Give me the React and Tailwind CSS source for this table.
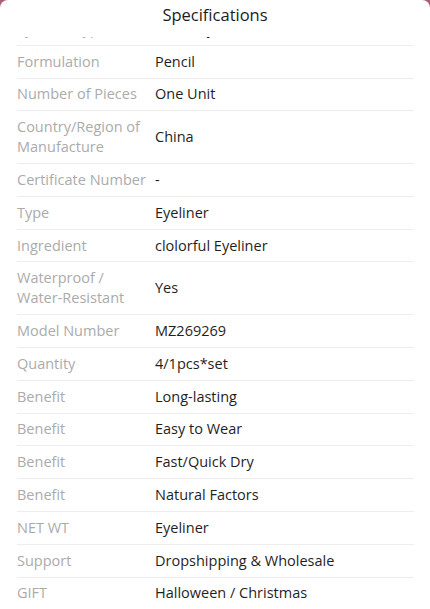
import React from "react";

const specs = [
  { label: "Eyeliner Type", value: "Pencil Eyeliner" },
  { label: "Formulation", value: "Pencil" },
  { label: "Number of Pieces", value: "One Unit" },
  { label: "Country/Region of Manufacture", value: "China" },
  { label: "Certificate Number", value: "-" },
  { label: "Type", value: "Eyeliner" },
  { label: "Ingredient", value: "clolorful Eyeliner" },
  { label: "Waterproof / Water-Resistant", value: "Yes" },
  { label: "Model Number", value: "MZ269269" },
  { label: "Quantity", value: "4/1pcs*set" },
  { label: "Benefit", value: "Long-lasting" },
  { label: "Benefit", value: "Easy to Wear" },
  { label: "Benefit", value: "Fast/Quick Dry" },
  { label: "Benefit", value: "Natural Factors" },
  { label: "NET WT", value: "Eyeliner" },
  { label: "Support", value: "Dropshipping & Wholesale" },
  { label: "GIFT", value: "Halloween / Christmas" },
];

function SpecRow({ label, value }) {
  return (
    <div className="flex items-center border-b border-[#ededed] py-[5.9px]">
      <div className="w-[138px] shrink-0 pr-2 text-[14.5px] leading-[20px] text-[#ababab]">{label}</div>
      <div className="flex-1 text-[14.5px] leading-[20px] text-[#1f1f1f]">{value}</div>
    </div>
  );
}

export default function App() {
  return (
    <div className="h-[609px] w-[430px] overflow-hidden bg-[#a8607a] font-['Open_Sans',sans-serif]">
      <div className="flex h-full flex-col rounded-t-[8px] bg-white">
        <div className="flex h-[37px] shrink-0 justify-center pt-[3px]">
          <h1 className="text-[16.5px] leading-[24px] text-[#1c1c1c]">Specifications</h1>
        </div>
        <div className="flex-1 overflow-hidden pl-[17px] pr-[16px]">
          <div className="-mt-[24px]">
            {specs.map((row, i) => (
              <SpecRow key={i} label={row.label} value={row.value} />
            ))}
          </div>
        </div>
      </div>
    </div>
  );
}
